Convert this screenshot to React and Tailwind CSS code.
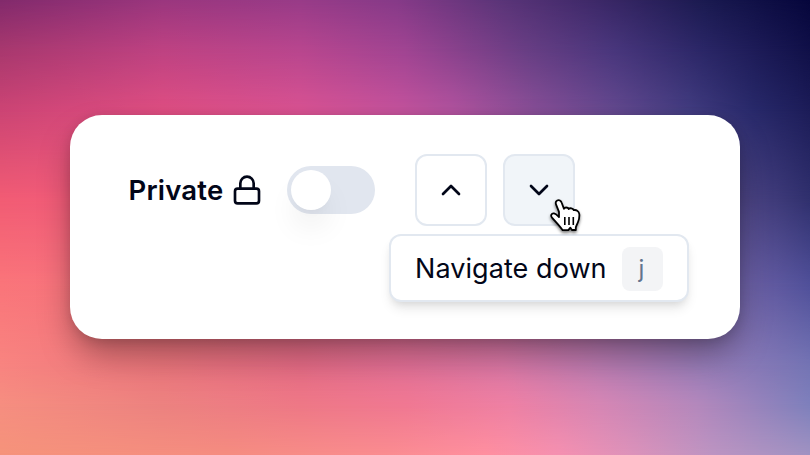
import { ChevronDown, ChevronUp, Lock } from "lucide-react";

const GradientBackdrop = () => (
  <div className="absolute inset-0 -z-10 bg-[linear-gradient(90deg,#822a6c_0%,#9a367e_20%,#983b88_37%,#863a88_49%,#5a3478_62%,#3c2868_74%,#1a1a50_87%,#06063c_100%)]">
    <div className="absolute inset-0 bg-[linear-gradient(90deg,#a8386e_0%,#be4282_20%,#b8468e_37%,#a04492_50%,#683e84_65%,#48367c_76%,#2a2666_87%,#101048_100%)] [mask-image:linear-gradient(180deg,transparent_0px,#000_50px)]" />
    <div className="absolute inset-0 bg-[linear-gradient(90deg,#cc4474_0%,#de4e82_20%,#d85292_37%,#c4529c_49%,#b0529e_56%,#864e96_66%,#62488e_76%,#423c80_85%,#28296a_93%,#1c1c58_100%)] [mask-image:linear-gradient(180deg,transparent_50px,#000_110px)]" />
    <div className="absolute inset-0 bg-[linear-gradient(90deg,#f25c74_0%,#f05c80_20%,#e06090_49%,#8a5c9c_74%,#4c4484_92%,#30306e_100%)] [mask-image:linear-gradient(180deg,transparent_110px,#000_200px)]" />
    <div className="absolute inset-0 bg-[linear-gradient(90deg,#fa757a_0%,#f47280_20%,#f078a0_49%,#a86aa8_74%,#6c60a4_92%,#50509a_100%)] [mask-image:linear-gradient(180deg,transparent_200px,#000_285px)]" />
    <div className="absolute inset-0 bg-[linear-gradient(90deg,#f88480_0%,#ec767c_20%,#e66c86_37%,#e47096_49%,#dc78a6_62%,#bc7cb2_74%,#967cb8_87%,#7474b4_100%)] [mask-image:linear-gradient(180deg,transparent_285px,#000_365px)]" />
    <div className="absolute inset-0 bg-[linear-gradient(90deg,#f68e80_0%,#ec8280_20%,#ee7886_37%,#f07892_50%,#ee80a4_63%,#d686b4_74%,#b488bc_86%,#7e80bc_100%)] [mask-image:linear-gradient(180deg,transparent_365px,#000_405px)]" />
    <div className="absolute inset-0 bg-[linear-gradient(90deg,#f5937a_0%,#f58c80_28%,#fa8c90_48%,#ff8f9f_60%,#f590b0_69%,#dc92ba_78%,#bc94c2_88%,#a092c2_100%)] [mask-image:linear-gradient(180deg,transparent_405px,#000_455px)]" />
  </div>
);

const HandCursor = () => (
  <svg
    className="pointer-events-none absolute top-[43px] left-[46px] z-20 drop-shadow-[0_2px_1.5px_rgba(0,0,0,0.5)]"
    width="36"
    height="38"
    viewBox="0 0 36 38"
    fill="none"
  >
    <path
      d="M8.2 3.5C10.1 2.5 12 3.6 12.7 5.7L14.9 11.8C15.3 10.2 18.8 9.9 19.8 12C20.8 10.8 24 11 24.8 13.2C27 12.5 29.9 14 30.3 17C30.6 20 30 22.7 29 25C28.1 27.2 27.1 28.8 26.8 30.5V33H22.9L21.4 30.7L19.3 33.2H13.7C12 31 10.8 29.5 9 27.4L3.2 20.8C1.1 18.7 2.6 16 5 16.4C7 16.8 8.4 18.5 10 20.1V14.9L7.1 7.6C6.4 5.8 6.8 4.2 8.2 3.5Z"
      fill="#fff"
      stroke="#000"
      strokeWidth="1.8"
      strokeLinejoin="round"
    />
    <path d="M15.8 20V28M20 20V28M24.3 20V28" stroke="#000" strokeWidth="1.6" />
  </svg>
);

const Tooltip = () => (
  <div
    role="tooltip"
    className="absolute top-20 left-[-114px] z-10 flex h-[68px] w-[300px] items-center justify-between rounded-xl border-2 border-slate-200 bg-white pt-0.5 pr-6 pl-6 shadow-[0_8px_12px_-2px_rgba(0,0,0,0.1),0_4px_8px_-4px_rgba(0,0,0,0.1)]"
  >
    <span className="text-[27px] leading-8 tracking-[0.07px] whitespace-nowrap">Navigate down</span>
    <kbd className="flex h-11 w-[41px] items-center justify-center rounded-lg bg-gray-100 pr-0.5 font-[Inter,sans-serif] text-2xl text-slate-500">
      j
    </kbd>
  </div>
);

export default function App() {
  return (
    <main className="relative isolate flex h-[455px] w-[810px] justify-center overflow-hidden pt-[115px] font-[Inter,sans-serif] text-slate-950">
      <GradientBackdrop />
      <section className="flex h-[224px] w-[670px] items-start rounded-[32px] bg-white pt-[39px] pl-[58px] shadow-[0_18px_34px_-4px_rgba(0,0,0,0.36),0_2px_12px_rgba(0,0,0,0.12)]">
        <div className="flex h-[72px] items-center">
          <span className="w-[103px] pt-0.5 pl-[0.5px] text-[27.5px] font-semibold tracking-[0.2px] whitespace-nowrap">Private</span>
          <Lock size={32} />
          <button
            role="switch"
            aria-checked="false"
            aria-label="Private"
            className="ml-6 flex h-12 w-[88px] items-center rounded-full bg-[#e1e6ef] p-1"
          >
            <span className="size-10 rounded-full bg-white shadow-[0_20px_30px_-4px_rgba(0,0,0,0.08),0_6px_12px_-8px_rgba(0,0,0,0.08)]" />
          </button>
        </div>
        <div className="ml-10 flex gap-4">
          <button aria-label="Navigate up" className="flex size-[72px] items-center justify-center rounded-xl border-2 border-slate-200 bg-white">
            <ChevronUp size={32} />
          </button>
          <div className="relative">
            <button aria-label="Navigate down" className="flex size-[72px] items-center justify-center rounded-xl border-2 border-slate-200 bg-slate-100">
              <ChevronDown size={32} />
            </button>
            <HandCursor />
            <Tooltip />
          </div>
        </div>
      </section>
    </main>
  );
}
